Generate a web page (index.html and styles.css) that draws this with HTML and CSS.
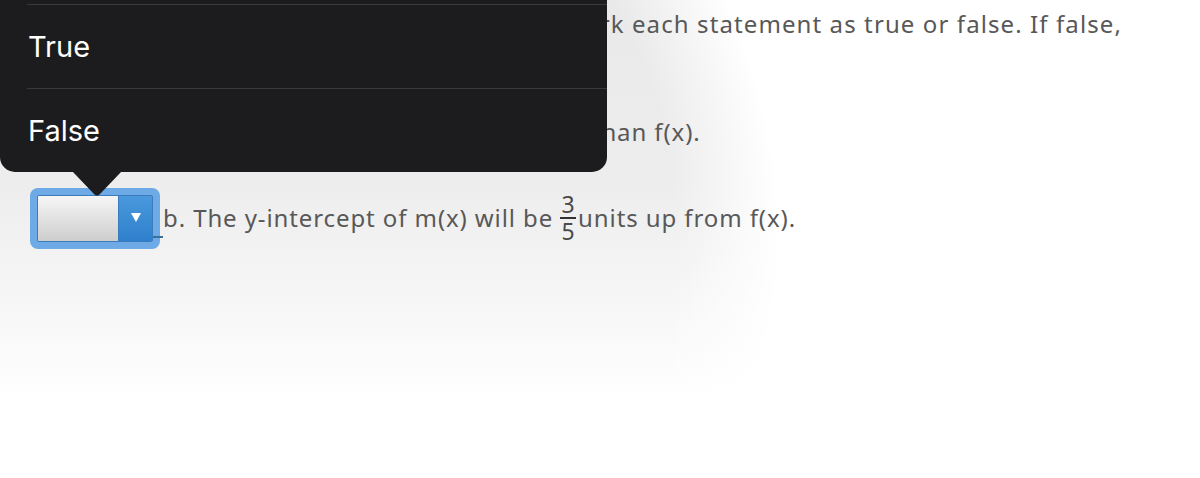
FILE: index.html
```html
<!DOCTYPE html>
<html lang="en">
<head>
<meta charset="utf-8">
<title>Question</title>
<link rel="stylesheet" href="styles.css">
</head>
<body>
<main class="page">
  <section class="question">
    <p class="line line-intro">1. Let m(x) = f(x + 2) + 3/5 and f(x) = 2x. Mark each statement as true or false. If false,</p>
    <p class="line line-cont">explain why it is false.</p>
    <div class="line statement first">
      <span class="select"><span class="select-box"><span class="select-field"></span><span class="select-btn"><span class="caret"></span></span></span></span><span class="blank">_</span><span>a. The slope of m(x) will be steeper than f(x).</span>
    </div>
    <div class="line statement">
      <span class="select focused"><span class="select-box"><span class="select-field"></span><span class="select-btn"><span class="caret"></span></span></span></span><span class="blank">_</span><span>b. The y-intercept of m(x) will be</span><span class="frac"><span class="num">3</span><span class="bar"></span><span class="den">5</span></span><span>units up from f(x).</span>
    </div>
  </section>

  <div class="popover" role="listbox">
    <div class="option option-empty">&nbsp;</div>
    <div class="option"><span class="option-label">True</span></div>
    <div class="option"><span class="option-label">False</span></div>
    <svg class="popover-arrow" width="50" height="26" viewBox="0 0 50 26"><path d="M0 0 H50 L28 23 Q25 26 22 23 Z" fill="#1c1c1e"/></svg>
  </div>
</main>
</body>
</html>
```

FILE: styles.css
```css
html, body {
  margin: 0;
  padding: 0;
}
body {
  width: 1200px;
  height: 478px;
  overflow: hidden;
  background-color: #ffffff;
  background-image:
    radial-gradient(ellipse 650px 600px at 130px 240px, rgba(255,255,255,0) 84%, #ffffff 100%),
    linear-gradient(to bottom, #e9e9e9 0, #ededed 180px, #f3f3f3 260px, #fcfcfc 370px, #ffffff 400px);
}
.page {
  position: relative;
  height: 478px;
}
.question {
  padding: 9px 0 0 30px;
  font-family: "Noto Sans", "Open Sans", sans-serif;
  font-size: 24px;
  color: #585858;
  letter-spacing: 0.9px;
}
.line {
  margin: 0;
  height: 52px;
  line-height: 30px;
  white-space: nowrap;
}
.line-intro {
  width: 1092px;
  text-align: right;
  letter-spacing: 1.1px;
}
.line-cont {
  height: 39px;
}
.statement {
  display: flex;
  align-items: center;
  height: 60px;
}
.statement.first {
  height: 64px;
  margin-bottom: 24px;
}
.select {
  display: inline-flex;
  padding: 7px;
  border-radius: 8px;
}
.select.focused {
  background: #6eaae6;
}
.select-box {
  display: flex;
  width: 114px;
  height: 45px;
  border: 1px solid #3a7cbc;
  border-radius: 2px;
  overflow: hidden;
}
.select-field {
  flex: 1;
  background: linear-gradient(#f6f6f6, #cdcdcd);
  border-right: 1px solid #3a7cbc;
}
.select-btn {
  width: 33px;
  display: flex;
  align-items: center;
  justify-content: center;
  background: linear-gradient(#4a99dd, #2f80cc);
}
.caret {
  width: 0;
  height: 0;
  border-left: 5px solid transparent;
  border-right: 5px solid transparent;
  border-top: 9px solid #ffffff;
  margin-top: -2px;
}
.blank {
  align-self: flex-end;
  margin: 0 0 10px -7px;
  width: 10px;
  height: 2px;
  overflow: hidden;
  background: #3b6f9c;
  color: transparent;
  font-size: 2px;
  line-height: 2px;
}
.frac {
  display: inline-flex;
  flex-direction: column;
  align-items: center;
  margin: 0 2px 0 7px;
  font-size: 23px;
  line-height: 19px;
  letter-spacing: 0;
  color: #4a4a4a;
}
.bar {
  width: 16px;
  height: 2px;
  margin: 3px 0 3px;
  background: #333333;
}
.popover {
  position: absolute;
  left: 0;
  top: -80px;
  width: 607px;
  background: #1c1c1e;
  border-radius: 15px;
  font-family: Inter, "Noto Sans", sans-serif;
  font-size: 29px;
  color: #ffffff;
}
.option {
  height: 84px;
  display: flex;
  align-items: center;
  padding-left: 28px;
}
.option + .option {
  height: 84px;
  margin-left: 27px;
  padding-left: 1px;
  border-top: 1px solid #3a3a3c;
  box-sizing: border-box;
}
.option-empty {
  height: 84px;
}
.popover-arrow {
  position: absolute;
  left: 72px;
  top: 100%;
  margin-top: -1px;
}
```
